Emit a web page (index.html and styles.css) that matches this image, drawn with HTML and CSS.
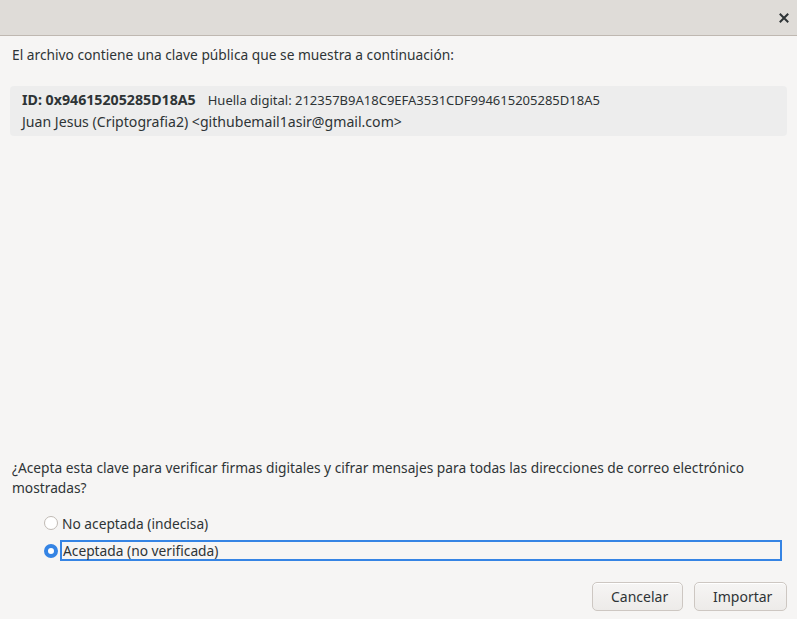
FILE: index.html
```html
<!DOCTYPE html>
<html lang="es">
<head>
<meta charset="utf-8">
<link rel="stylesheet" href="styles.css">
</head>
<body>
<div class="dialog">
  <header class="titlebar">
    <button class="close" aria-label="Cerrar">
      <svg width="10" height="10" viewBox="0 0 10 10"><path d="M1.5 1.5 L8.5 8.5 M8.5 1.5 L1.5 8.5" stroke="#2e3436" stroke-width="2" stroke-linecap="square"/></svg>
    </button>
  </header>
  <main class="content">
    <p class="intro">El archivo contiene una clave pública que se muestra a continuación:</p>
    <div class="keybox">
      <div class="keyline"><span class="keyid">ID: 0x94615205285D18A5</span><span class="fpr">Huella digital: 212357B9A18C9EFA3531CDF994615205285D18A5</span></div>
      <div class="keyuser">Juan Jesus (Criptografia2) &lt;githubemail1asir@gmail.com&gt;</div>
    </div>
    <div class="spacer"></div>
    <p class="question">¿Acepta esta clave para verificar firmas digitales y cifrar mensajes para todas las direcciones de correo electrónico mostradas?</p>
    <div class="options">
      <label class="opt"><span class="radio"></span><span class="label">No aceptada (indecisa)</span></label>
      <label class="opt"><span class="radio checked"></span><span class="label focus">Aceptada (no verificada)</span></label>
    </div>
    <div class="actions">
      <button class="btn">Cancelar</button>
      <button class="btn">Importar</button>
    </div>
  </main>
</div>
</body>
</html>
```
FILE: styles.css
```css
html, body {
  margin: 0;
  padding: 0;
}
body {
  width: 797px;
  height: 619px;
  background: #f6f5f4;
  font-family: "Noto Sans", "Open Sans", sans-serif;
  font-size: 13.75px;
  color: #2e3436;
  overflow: hidden;
}
.dialog {
  display: flex;
  flex-direction: column;
  height: 619px;
}
.titlebar {
  height: 35px;
  background: #dfdcd8;
  border-bottom: 1px solid #bfb8b1;
  display: flex;
  justify-content: flex-end;
  align-items: center;
  flex-shrink: 0;
}
.close {
  border: 0;
  background: transparent;
  padding: 0;
  width: 24px;
  height: 24px;
  margin-right: 1px;
  display: flex;
  align-items: center;
  justify-content: center;
}
.content {
  flex: 1;
  display: flex;
  flex-direction: column;
  padding: 0 10px 8px 12px;
}
.intro {
  margin: 9px 0 0 0;
  line-height: 20px;
}
.keybox {
  margin: 21px 0 0 -2px;
  background: #ededed;
  border-radius: 4px;
  padding: 4px 12px 4px 12px;
}
.keyline {
  line-height: 20px;
  height: 22px;
}
.keyid {
  font-weight: bold;
  font-size: 14.2px;
}
.fpr {
  font-size: 13px;
  margin-left: 12px;
}
.keyuser {
  line-height: 20px;
  font-size: 14.1px;
}
.spacer {
  flex: 1;
}
.question {
  margin: 0;
  line-height: 20px;
}
.options {
  margin: 14px 0 0 32px;
  display: flex;
  flex-direction: column;
  gap: 7px;
}
.opt {
  display: flex;
  align-items: center;
  height: 21px;
}
.radio {
  width: 14px;
  height: 14px;
  border-radius: 50%;
  border: 1px solid #c0bab4;
  background: #fff;
  box-sizing: border-box;
  margin-right: 2px;
  flex-shrink: 0;
}
.radio.checked {
  border: 4px solid #3584e4;
  background: #fff;
}
.label {
  line-height: 21px;
  padding-left: 1px;
  box-sizing: border-box;
  height: 21px;
  border: 1px solid transparent;
}
.label.focus {
  flex: 1;
  border: 2px solid #3584e4;
  line-height: 17px;
  margin-right: 5px;
}
.actions {
  margin-top: 21px;
  display: flex;
  justify-content: flex-end;
  gap: 11px;
}
.btn {
  font-family: inherit;
  font-size: 14px;
  color: #2e3436;
  height: 29px;
  padding: 0 18px;
  border: 1px solid #cdc7c2;
  border-radius: 5px;
  background: linear-gradient(#f6f5f4, #edebe9);
  box-shadow: inset 0 1px #fff;
}
.btn:first-child { width: 91px; }
.btn:last-child { width: 93px; }
```
